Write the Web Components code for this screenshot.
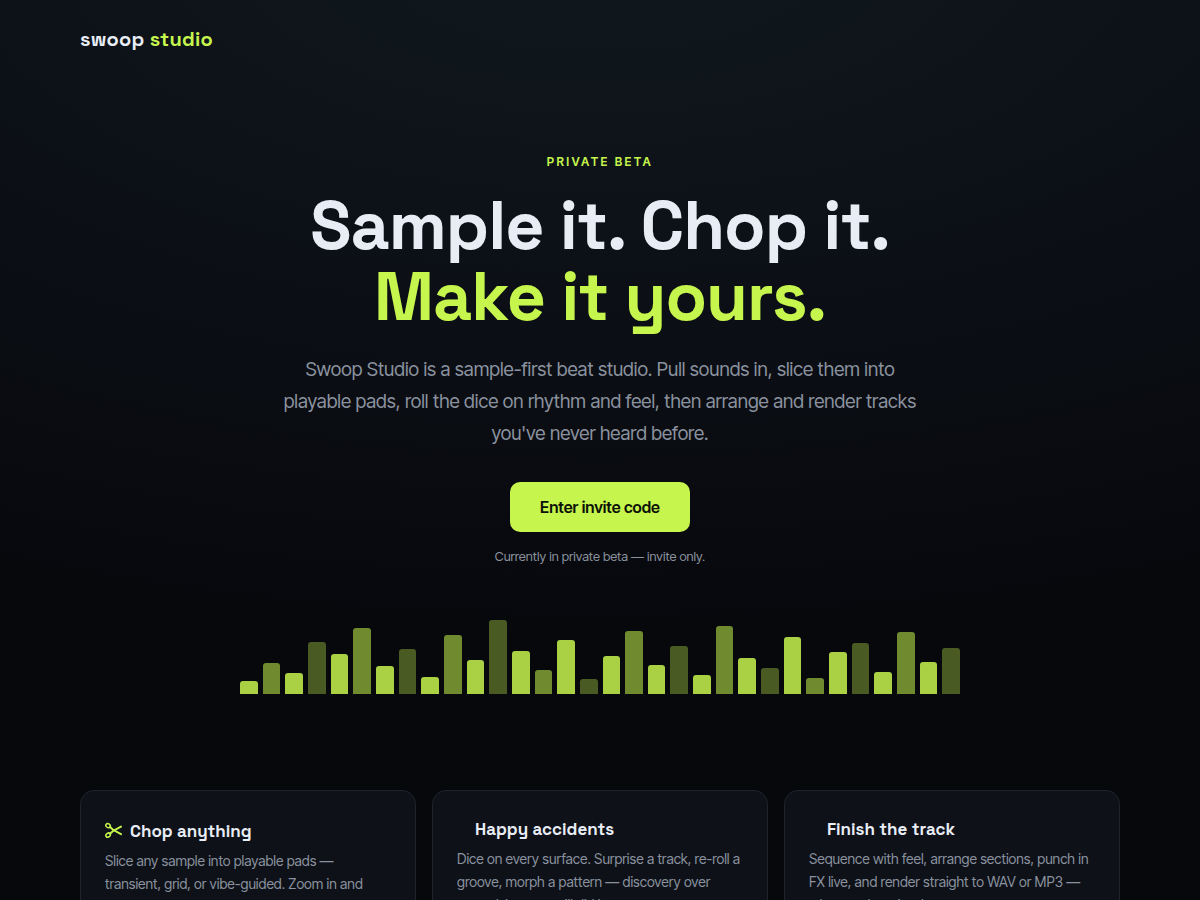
<!DOCTYPE html>
<html lang="en">
<head>
<meta charset="utf-8">
<meta name="viewport" content="width=device-width, initial-scale=1">
<title>Swoop Studio</title>
<style>
  :root {
    --accent: #c6f54d;
    --text: #e8edf5;
    --muted: #8a929f;
    --panel: #0e1118;
    --line: #1f242c;
    --display: "Space Grotesk", Inter, sans-serif;
    --body: "Inter Tight", Inter, sans-serif;
  }
  html { background: #07080c; }
  body {
    margin: 0;
    min-height: 100vh;
    color: var(--text);
    font-family: var(--body);
    background: radial-gradient(ellipse 1500px 700px at 50% -60px, #10191f 0%, #0d1118 40%, #07080c 100%) no-repeat;
  }
</style>
</head>
<body>
<swoop-page>
  <swoop-logo slot="header"></swoop-logo>
  <swoop-hero>
    <span slot="eyebrow">Private beta</span>
    <span slot="title">Sample it. Chop it.</span>
    <span slot="accent">Make it yours.</span>
    <span slot="lead">Swoop Studio is a sample-first beat studio. Pull sounds in, slice them into playable pads, roll the dice on rhythm and feel, then arrange and render tracks you've never heard before.</span>
    <swoop-button slot="action">Enter invite code</swoop-button>
    <span slot="note">Currently in private beta — invite only.</span>
  </swoop-hero>
  <swoop-bars values="13 31 21 52 40 66 28 45 17 59 34 74 43 24 54 15 38 63 29 48 19 68 36 26 57 16 42 51 22 62 32 46"></swoop-bars>
  <swoop-features>
    <swoop-card>
      <swoop-scissors slot="icon"></swoop-scissors>
      <span slot="title">Chop anything</span>
      Slice any sample into playable pads — transient, grid, or vibe-guided. Zoom in and
    </swoop-card>
    <swoop-card>
      <span slot="title">Happy accidents</span>
      Dice on every surface. Surprise a track, re-roll a groove, morph a pattern — discovery over control, but you still did it.
    </swoop-card>
    <swoop-card>
      <span slot="title">Finish the track</span>
      Sequence with feel, arrange sections, punch in FX live, and render straight to WAV or MP3 — what you hear is what you get.
    </swoop-card>
  </swoop-features>
</swoop-page>

<script>
class SwoopPage extends HTMLElement {
  constructor() {
    super();
    this.attachShadow({ mode: "open" });
  }
  connectedCallback() {
    this.shadowRoot.innerHTML = `
      <style>
        :host { display: block; max-width: 1040px; margin: 0 auto; padding: 0 24px; }
        header { padding: 26px 0; }
      </style>
      <header><slot name="header"></slot></header>
      <main><slot></slot></main>
    `;
  }
}
customElements.define("swoop-page", SwoopPage);

class SwoopLogo extends HTMLElement {
  constructor() {
    super();
    this.attachShadow({ mode: "open" });
  }
  connectedCallback() {
    this.shadowRoot.innerHTML = `
      <style>
        :host { display: block; font: 600 20px/26px var(--display); letter-spacing: .01em; }
        span { color: var(--accent); }
      </style>
      swoop <span>studio</span>
    `;
  }
}
customElements.define("swoop-logo", SwoopLogo);

class SwoopHero extends HTMLElement {
  constructor() {
    super();
    this.attachShadow({ mode: "open" });
  }
  connectedCallback() {
    this.shadowRoot.innerHTML = `
      <style>
        :host { display: flex; flex-direction: column; align-items: center; padding: 72px 0 54px; text-align: center; }
        p, h1 { margin: 0; }
        .eyebrow { font-size: 12px; font-weight: 600; line-height: 24px; letter-spacing: .2em; text-transform: uppercase; color: var(--accent); }
        h1 { margin-top: 16px; font: 700 68px/71px var(--display); letter-spacing: -1px; }
        .accent { display: block; color: var(--accent); }
        .lead { max-width: 640px; margin: 22px 0 32px; font-size: 19px; line-height: 32px; color: var(--muted); }
        .note { margin-top: 14px; font-size: 13px; line-height: 20px; color: var(--muted); }
      </style>
      <p class="eyebrow"><slot name="eyebrow"></slot></p>
      <h1><slot name="title"></slot><span class="accent"><slot name="accent"></slot></span></h1>
      <p class="lead"><slot name="lead"></slot></p>
      <slot name="action"></slot>
      <p class="note"><slot name="note"></slot></p>
    `;
  }
}
customElements.define("swoop-hero", SwoopHero);

class SwoopButton extends HTMLElement {
  constructor() {
    super();
    this.attachShadow({ mode: "open" });
  }
  connectedCallback() {
    this.shadowRoot.innerHTML = `
      <style>
        :host { display: inline-block; }
        button {
          padding: 12px 30px; border: 0; border-radius: 10px; cursor: pointer;
          background: var(--accent); color: #0c1207; font: 600 16px/26px var(--body);
        }
        button:hover { filter: brightness(1.06); }
      </style>
      <button type="button"><slot></slot></button>
    `;
  }
}
customElements.define("swoop-button", SwoopButton);

class SwoopBars extends HTMLElement {
  constructor() {
    super();
    this.attachShadow({ mode: "open" });
  }
  connectedCallback() {
    const values = this.getAttribute("values").split(" ");
    this.shadowRoot.innerHTML = `
      <style>
        :host { display: flex; align-items: flex-end; gap: 5px; max-width: 720px; height: 74px; margin: 0 auto 96px; }
        i { flex: 1; border-radius: 3px 3px 0 0; background: var(--accent); opacity: .85; }
        i:nth-of-type(2n) { opacity: .55; }
        i:nth-of-type(4n) { opacity: .35; }
      </style>
      ${values.map((v) => `<i style="height:${v}px"></i>`).join("")}
    `;
  }
}
customElements.define("swoop-bars", SwoopBars);

class SwoopFeatures extends HTMLElement {
  constructor() {
    super();
    this.attachShadow({ mode: "open" });
  }
  connectedCallback() {
    this.shadowRoot.innerHTML = `
      <style>
        :host { display: grid; grid-template-columns: repeat(auto-fit, minmax(260px, 1fr)); gap: 16px; padding-bottom: 80px; }
      </style>
      <slot></slot>
    `;
  }
}
customElements.define("swoop-features", SwoopFeatures);

class SwoopCard extends HTMLElement {
  constructor() {
    super();
    this.attachShadow({ mode: "open" });
  }
  connectedCallback() {
    this.shadowRoot.innerHTML = `
      <style>
        :host { display: block; padding: 24px; border: 1px solid var(--line); border-radius: 14px; background: var(--panel); }
        h2 { display: flex; align-items: flex-end; gap: 8px; margin: 0 0 4px; font: 600 17px/28px var(--display); }
        .icon { display: flex; min-width: 10px; }
        p { margin: 0; font-size: 14px; line-height: 23px; color: var(--muted); }
      </style>
      <h2><span class="icon"><slot name="icon"></slot></span><slot name="title"></slot></h2>
      <p><slot></slot></p>
    `;
  }
}
customElements.define("swoop-card", SwoopCard);

class SwoopScissors extends HTMLElement {
  constructor() {
    super();
    this.attachShadow({ mode: "open" });
  }
  connectedCallback() {
    this.shadowRoot.innerHTML = `
      <style>
        :host { display: flex; align-items: center; height: 30px; color: var(--accent); }
        svg { display: block; }
      </style>
      <svg width="17" height="16" viewBox="0 0 17 16" fill="none" stroke="currentColor" stroke-width="1.5" stroke-linecap="round" aria-hidden="true">
        <ellipse cx="3.1" cy="3.7" rx="2.4" ry="1.9" transform="rotate(35 3.1 3.7)"/>
        <ellipse cx="3.1" cy="13.1" rx="2.4" ry="1.9" transform="rotate(-35 3.1 13.1)"/>
        <path d="M5 5L8 7.8L16 12.2M5 11.8L8 9L16 4.6" stroke-width="1.9"/>
      </svg>
    `;
  }
}
customElements.define("swoop-scissors", SwoopScissors);
</script>
</body>
</html>
